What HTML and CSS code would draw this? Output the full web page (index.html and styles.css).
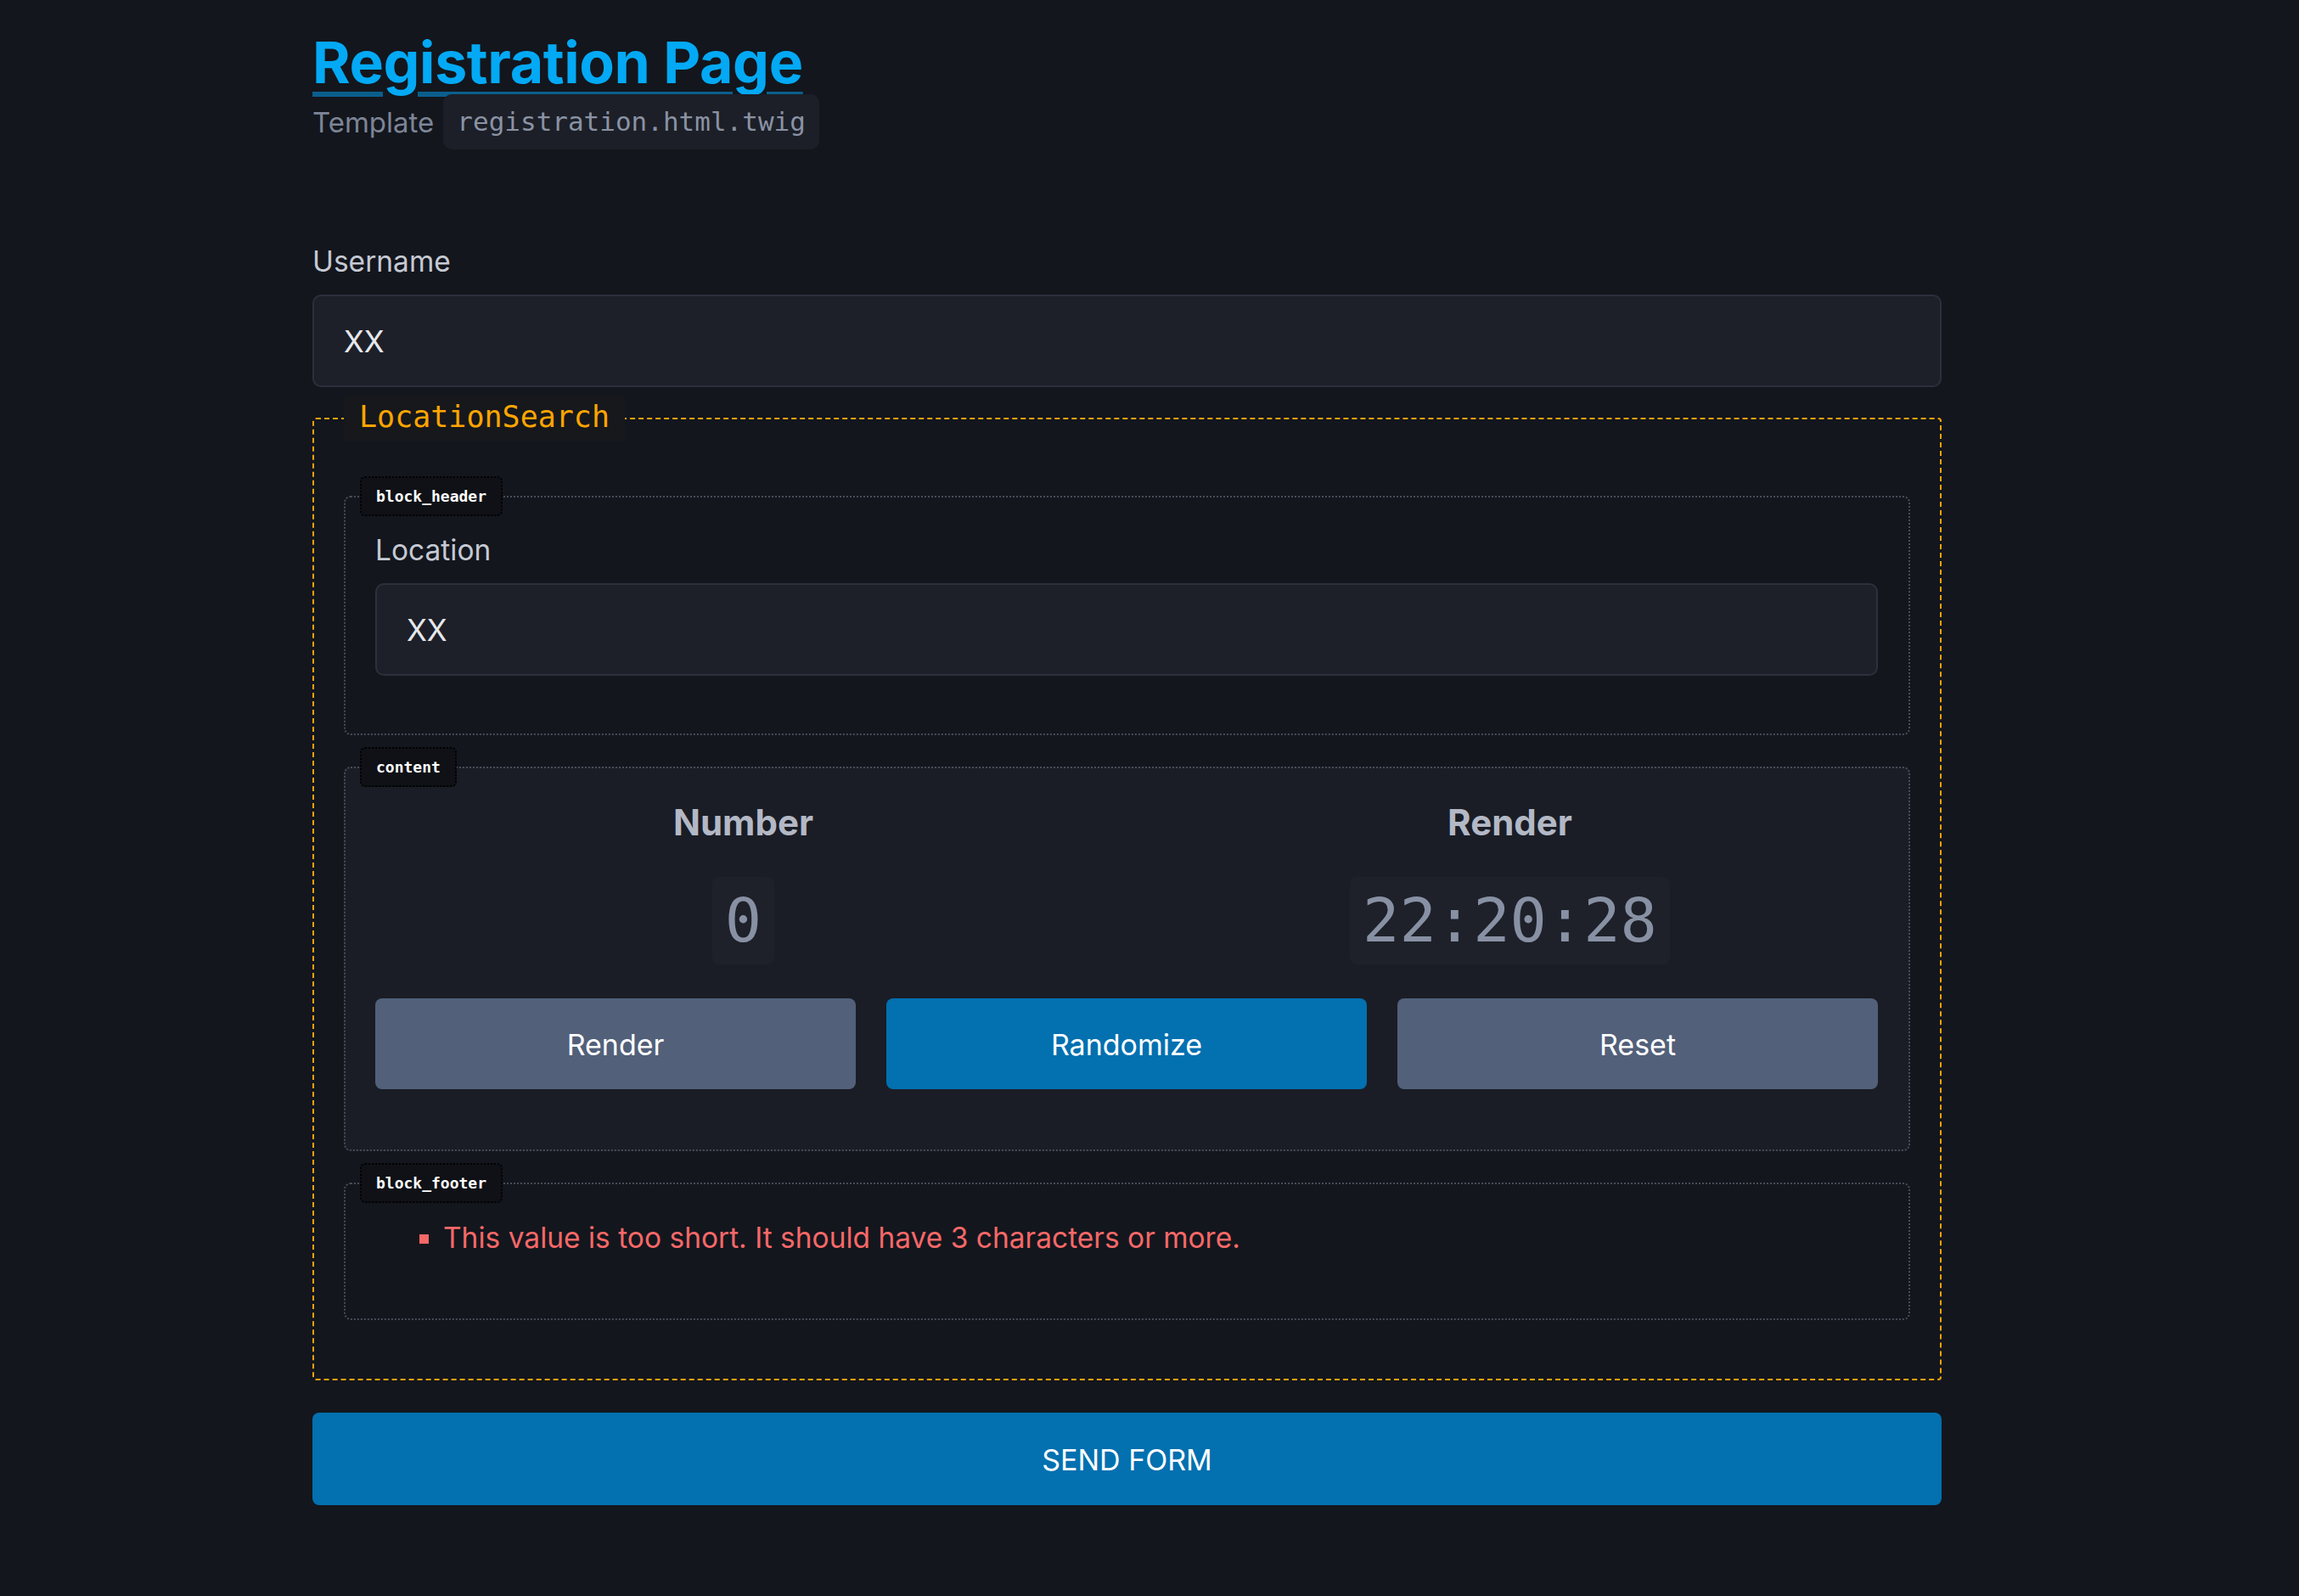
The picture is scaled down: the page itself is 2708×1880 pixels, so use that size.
FILE: index.html
```html
<!DOCTYPE html>
<html lang="en">
<head>
<meta charset="utf-8">
<title>Registration Page</title>
<link rel="stylesheet" href="styles.css">
</head>
<body>
<main class="page">
  <header class="page-header">
    <h1 class="title"><a href="#" class="title-link">Registration Page</a></h1>
    <p class="template"><span>Template</span><code class="template-code">registration.html.twig</code></p>
  </header>
  <form class="form">
    <div class="form-group form-group-top">
      <label class="form-label" for="username">Username</label>
      <input class="form-input" id="username" type="text" value="XX">
    </div>
    <fieldset class="component">
      <legend class="component-name">LocationSearch</legend>
      <section class="block">
        <span class="block-tag">block_header</span>
        <div class="form-group">
          <label class="form-label" for="location">Location</label>
          <input class="form-input" id="location" type="text" value="XX">
        </div>
      </section>
      <section class="block block-content">
        <span class="block-tag">content</span>
        <div class="stats">
          <div class="stat">
            <h3 class="stat-title">Number</h3>
            <code class="stat-value">0</code>
          </div>
          <div class="stat">
            <h3 class="stat-title">Render</h3>
            <code class="stat-value">22:20:28</code>
          </div>
        </div>
        <div class="actions">
          <button type="button" class="btn btn-muted">Render</button>
          <button type="button" class="btn btn-primary">Randomize</button>
          <button type="button" class="btn btn-muted">Reset</button>
        </div>
      </section>
      <section class="block">
        <span class="block-tag">block_footer</span>
        <ul class="errors">
          <li>This value is too short. It should have 3 characters or more.</li>
        </ul>
      </section>
    </fieldset>
    <button type="submit" class="submit">SEND FORM</button>
  </form>
</main>
</body>
</html>
```

FILE: styles.css
```css
html, body {
  margin: 0;
  background: #13161d;
}

body {
  font-family: Inter, "Noto Sans", "Liberation Sans", sans-serif;
  color: #c5c9d3;
}

.page {
  width: 1919px;
  margin-left: 368px;
  padding-top: 32px;
  padding-bottom: 80px;
}

.title {
  margin: 0;
  font-size: 68px;
  line-height: 82px;
  font-weight: 700;
  letter-spacing: -0.4px;
}

.title-link {
  color: #03a9f4;
  text-decoration: underline;
  text-decoration-color: #0a5f8c;
  text-decoration-thickness: 6px;
  text-underline-offset: 10px;
}

.template {
  display: flex;
  align-items: center;
  gap: 11px;
  margin: -3px 0 0;
  font-size: 33px;
  color: #7d8596;
}

.template-code {
  position: relative;
  font-family: "DejaVu Sans Mono", "Liberation Mono", monospace;
  font-size: 31px;
  line-height: 47px;
  padding: 9px 16px;
  background: #1c1f27;
  border-radius: 10px;
  color: #8a92a4;
}

.form {
  margin-top: 106px;
}

.form-group-top {
  margin-bottom: 10px;
}

.form-label {
  display: block;
  font-size: 33.5px;
  line-height: 52px;
  color: #c5c9d3;
  margin-bottom: 13px;
}

.form-input {
  display: block;
  width: 100%;
  box-sizing: border-box;
  height: 109px;
  margin: 0;
  padding: 0 35px;
  background: #1d2029;
  border: 2px solid #2b303b;
  border-radius: 10px;
  font-family: inherit;
  font-size: 35px;
  color: #e6e8ec;
  outline: none;
}

.component {
  margin: 0;
  min-width: 0;
  padding: 64px 35px 69px;
  border: 2px dashed #f5a20a;
  border-radius: 4px;
}

.component-name {
  padding: 0 18px 4px;
  font-family: "DejaVu Sans Mono", "Liberation Mono", monospace;
  font-size: 35px;
  line-height: 50px;
  color: #ffa500;
  background: #16181c;
}

.block {
  position: relative;
  padding: 36px 36px 68px 35px;
  border: 2px dotted #474c58;
  border-radius: 8px;
}

.block + .block {
  margin-top: 37px;
}

.block-content {
  padding-bottom: 67px;
  background: #1a1d25;
}

.block-tag {
  position: absolute;
  top: -25px;
  left: 17px;
  padding: 11px 17px;
  font-family: "DejaVu Sans Mono", "Liberation Mono", monospace;
  font-size: 18px;
  line-height: 21px;
  font-weight: 700;
  color: #ffffff;
  background: #0f1116;
  border: 2px dotted #000000;
  border-radius: 6px;
}

.stats {
  display: grid;
  grid-template-columns: 1fr 1fr;
  column-gap: 36px;
}

.stat {
  display: flex;
  flex-direction: column;
  align-items: center;
}

.stat-title {
  margin: 0 0 36px;
  font-size: 42px;
  line-height: 56px;
  font-weight: 700;
  color: #b3b8c5;
}

.stat-value {
  font-family: "DejaVu Sans Mono", "Liberation Mono", monospace;
  font-size: 72px;
  line-height: 77px;
  padding: 13px 15px;
  background: #1e2129;
  border-radius: 8px;
  color: #8891a4;
}

.actions {
  display: grid;
  grid-template-columns: repeat(3, 1fr);
  column-gap: 36px;
  margin-top: 40px;
  margin-bottom: 4px;
}

.btn {
  height: 107px;
  padding-top: 3px;
  border: none;
  border-radius: 8px;
  font-family: inherit;
  font-size: 34px;
  color: #ffffff;
}

.btn-muted {
  background: #52607a;
}

.btn-primary {
  background: #0370b0;
}

.errors {
  margin: 0;
  padding-left: 80px;
  list-style: square;
  font-size: 33.5px;
  line-height: 54px;
  color: #f76868;
}

.submit {
  display: block;
  width: 100%;
  height: 109px;
  margin-top: 38px;
  padding-top: 2px;
  border: none;
  border-radius: 8px;
  background: #0370b0;
  font-family: inherit;
  font-size: 34px;
  color: #ffffff;
}
```
